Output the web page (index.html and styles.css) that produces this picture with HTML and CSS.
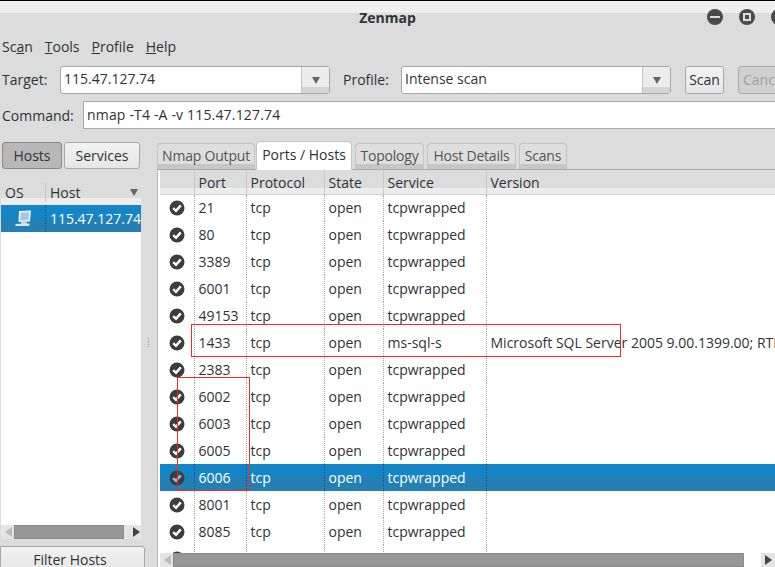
FILE: index.html
```html
<!DOCTYPE html>
<html lang="en">
<head>
    <meta charset="UTF-8">
    <title>Zenmap</title>
    <link rel="stylesheet" href="styles.css">
</head>
<body>
    <svg class="defs" width="0" height="0">
        <symbol id="ok" viewBox="0 0 16 16">
            <circle cx="8" cy="8" r="7.5" fill="#3d3d3d"/>
            <path d="M4.2 8.2 L7 10.8 L11.8 5.4" fill="none" stroke="currentColor" stroke-width="2.4"/>
        </symbol>
    </svg>
    <div class="title-bar">
        <h1>Zenmap</h1>
        <div class="win-buttons">
            <span class="win-btn"><i class="min"></i></span>
            <span class="win-btn"><i class="max"></i></span>
            <span class="win-btn"></span>
        </div>
    </div>
    <div class="menu-bar">
        <span>Sc<u>a</u>n</span>
        <span><u>T</u>ools</span>
        <span><u>P</u>rofile</span>
        <span><u>H</u>elp</span>
    </div>
    <div class="target-row">
        <label class="target-label">Target:</label>
        <div class="combo">
            <span class="combo-text">115.47.127.74</span>
            <span class="combo-arrow"><i class="tri-down"></i></span>
        </div>
        <label class="profile-label">Profile:</label>
        <div class="combo">
            <span class="combo-text">Intense scan</span>
            <span class="combo-arrow"><i class="tri-down"></i></span>
        </div>
        <button class="btn scan-btn">Scan</button>
        <button class="btn cancel-btn">Cancel</button>
    </div>
    <div class="command-row">
        <label>Command:</label>
        <div class="command-input">nmap -T4 -A -v 115.47.127.74</div>
    </div>
    <div class="panes">
        <aside class="side">
            <div class="side-toggle">
                <button class="btn toggle on">Hosts</button>
                <button class="btn toggle">Services</button>
            </div>
            <div class="host-head">
                <span class="host-os">OS</span>
                <span class="host-name">Host</span>
                <i class="tri-down"></i>
            </div>
            <div class="host-list">
                <div class="host-row">
                    <span class="host-icon">
                        <svg width="17" height="17" viewBox="0 0 17 17">
                            <path d="M4 1 L16 0.5 L15 11.5 L3.5 12 Z" fill="#f2f6f9"/>
                            <path d="M5.5 2.5 L14.4 2.2 L13.6 10 L5.2 10.4 Z" fill="#a8c8de"/>
                            <path d="M6 12 L12 12 L12 14 L6 14 Z" fill="#bcd4e4"/>
                            <path d="M0.5 14 L14.5 13.6 L14.5 16 L0.5 16 Z" fill="#dbe8f1"/>
                        </svg>
                    </span>
                    <span class="host-ip">115.47.127.74</span>
                </div>
            </div>
            <div class="scrollbar side-scroll">
                <i class="tri-left"></i>
                <span class="thumb"></span>
                <i class="tri-right"></i>
            </div>
            <button class="btn filter-btn">Filter Hosts</button>
        </aside>
        <div class="grip"><i></i></div>
        <section class="notebook">
            <div class="tabs">
                <span class="tab tab-nmap">Nmap Output</span>
                <span class="tab active">Ports / Hosts</span>
                <span class="tab tab-topo">Topology</span>
                <span class="tab tab-details">Host Details</span>
                <span class="tab tab-scans">Scans</span>
            </div>
            <div class="page">
                <div class="ports-wrap">
                    <table class="ports">
                        <colgroup>
                            <col class="c-icon"><col class="c-port"><col class="c-proto">
                            <col class="c-state"><col class="c-service"><col class="c-version">
                        </colgroup>
                        <thead>
                            <tr><th></th><th>Port</th><th>Protocol</th><th>State</th><th>Service</th><th>Version</th></tr>
                        </thead>
                        <tbody>
                            <tr><td class="ic"><svg><use href="#ok"/></svg></td><td>21</td><td>tcp</td><td>open</td><td>tcpwrapped</td><td></td></tr>
                            <tr><td class="ic"><svg><use href="#ok"/></svg></td><td>80</td><td>tcp</td><td>open</td><td>tcpwrapped</td><td></td></tr>
                            <tr><td class="ic"><svg><use href="#ok"/></svg></td><td>3389</td><td>tcp</td><td>open</td><td>tcpwrapped</td><td></td></tr>
                            <tr><td class="ic"><svg><use href="#ok"/></svg></td><td>6001</td><td>tcp</td><td>open</td><td>tcpwrapped</td><td></td></tr>
                            <tr><td class="ic"><svg><use href="#ok"/></svg></td><td>49153</td><td>tcp</td><td>open</td><td>tcpwrapped</td><td></td></tr>
                            <tr><td class="ic"><svg><use href="#ok"/></svg></td><td>1433</td><td>tcp</td><td>open</td><td>ms-sql-s</td><td>Microsoft SQL Server 2005 9.00.1399.00; RTM</td></tr>
                            <tr><td class="ic"><svg><use href="#ok"/></svg></td><td>2383</td><td>tcp</td><td>open</td><td>tcpwrapped</td><td></td></tr>
                            <tr><td class="ic"><svg><use href="#ok"/></svg></td><td>6002</td><td>tcp</td><td>open</td><td>tcpwrapped</td><td></td></tr>
                            <tr><td class="ic"><svg><use href="#ok"/></svg></td><td>6003</td><td>tcp</td><td>open</td><td>tcpwrapped</td><td></td></tr>
                            <tr><td class="ic"><svg><use href="#ok"/></svg></td><td>6005</td><td>tcp</td><td>open</td><td>tcpwrapped</td><td></td></tr>
                            <tr class="selected"><td class="ic"><svg><use href="#ok"/></svg></td><td>6006</td><td>tcp</td><td>open</td><td>tcpwrapped</td><td></td></tr>
                            <tr><td class="ic"><svg><use href="#ok"/></svg></td><td>8001</td><td>tcp</td><td>open</td><td>tcpwrapped</td><td></td></tr>
                            <tr><td class="ic"><svg><use href="#ok"/></svg></td><td>8085</td><td>tcp</td><td>open</td><td>tcpwrapped</td><td></td></tr>
                            <tr><td class="ic"><svg><use href="#ok"/></svg></td><td></td><td></td><td></td><td></td><td></td></tr>
                        </tbody>
                    </table>
                </div>
                <div class="scrollbar main-scroll">
                    <i class="tri-left"></i>
                    <span class="thumb"></span>
                    <span class="scroll-rest"></span>
                    <span class="scroll-end"><i class="tri-right"></i></span>
                </div>
            </div>
        </section>
    </div>
    <!-- red marks drawn over the screenshot -->
    <div class="mark mark-sql"></div>
    <div class="mark mark-ports"></div>
</body>
</html>
```

FILE: styles.css
```css
* {
    margin: 0;
    padding: 0;
    box-sizing: border-box;
    font-family: "Open Sans", "Noto Sans", sans-serif;
}

html, body {
    width: 775px;
    height: 567px;
    overflow: hidden;
}

body {
    position: relative;
    background-color: #dcdcdc;
    color: #2e3436;
    font-size: 14px;
}

.defs {
    position: absolute;
}

.title-bar {
    height: 32px;
    border-top: 1px solid #000;
    background: linear-gradient(#efefef 0, #efefef 12px, #dcdcdc 12px);
    display: flex;
    justify-content: center;
    align-items: center;
    position: relative;
}

.title-bar h1 {
    font-size: 14px;
    font-weight: 700;
    color: #2e3436;
    margin-top: 1px;
}

.win-buttons {
    position: absolute;
    left: 707px;
    top: 8px;
    display: flex;
    gap: 16px;
}

.win-btn {
    width: 16px;
    height: 16px;
    border-radius: 50%;
    background-color: #4a4a4a;
    display: flex;
    align-items: center;
    justify-content: center;
}

.win-btn .min {
    width: 10px;
    height: 2px;
    background-color: #dcdcdc;
}

.win-btn .max {
    width: 8px;
    height: 8px;
    border: 2px solid #dcdcdc;
}

.menu-bar {
    height: 34px;
    padding-left: 2px;
    padding-bottom: 6px;
    display: flex;
    align-items: center;
    gap: 12px;
}

.target-row {
    height: 28px;
    display: flex;
    align-items: center;
}

.target-label {
    width: 60px;
    padding-left: 2px;
    padding-bottom: 2px;
    flex-shrink: 0;
}

.profile-label {
    width: 58px;
    margin-left: 13px;
    padding-bottom: 2px;
    flex-shrink: 0;
}

.combo {
    width: 270px;
    height: 28px;
    flex-shrink: 0;
    background-color: #fff;
    border: 1px solid #a8a8a8;
    border-radius: 3px;
    display: flex;
}

.combo-text {
    flex: 1;
    padding-left: 3px;
    line-height: 24px;
}

.combo-arrow {
    width: 28px;
    border-left: 1px solid #c4c4c4;
    background: linear-gradient(#ececec 0, #ececec 20px, #d4d4d4 20px);
    display: flex;
    align-items: center;
    justify-content: center;
}

.tri-down {
    width: 0;
    height: 0;
    border-left: 4px solid transparent;
    border-right: 4px solid transparent;
    border-top: 7px solid #666;
}

.tri-left, .tri-right {
    width: 0;
    height: 0;
    border-top: 5px solid transparent;
    border-bottom: 5px solid transparent;
}

.tri-left {
    border-right: 7px solid #bbb;
}

.tri-right {
    border-left: 7px solid #444;
}

.btn {
    background: linear-gradient(#f2f2f2, #e6e6e6);
    border: 1px solid #a8a8a8;
    border-radius: 3px;
    color: #2e3436;
    font-size: 14px;
}

.scan-btn {
    width: 39px;
    height: 28px;
    margin-left: 14px;
    padding-bottom: 2px;
    flex-shrink: 0;
}

.cancel-btn {
    width: 60px;
    height: 28px;
    margin-left: 14px;
    padding: 0 0 2px 4px;
    flex-shrink: 0;
    background: #d0d0d0;
    color: #a0a0a0;
    overflow: hidden;
    white-space: nowrap;
    text-align: left;
}

.command-row {
    height: 28px;
    margin-top: 7px;
    display: flex;
    align-items: center;
}

.command-row label {
    width: 83px;
    padding-left: 2px;
    flex-shrink: 0;
}

.command-input {
    flex: 1;
    height: 28px;
    background-color: #fff;
    border: 1px solid #a8a8a8;
    border-right: none;
    padding-left: 3px;
    line-height: 26px;
    letter-spacing: .17px;
}

.panes {
    height: 425px;
    margin-top: 13px;
    display: flex;
}

.side {
    width: 141px;
    display: flex;
    flex-direction: column;
}

.side > * {
    flex-shrink: 0;
}

.side-toggle {
    height: 27px;
    padding-left: 2px;
    display: flex;
    gap: 2px;
}

.toggle {
    width: 60px;
    height: 27px;
}

.toggle + .toggle {
    width: 76px;
}

.toggle.on {
    background-color: #b8b8b8;
    background-image: none;
    border-color: #8a8a8a;
}

.host-head {
    height: 24px;
    margin-top: 12px;
    margin-left: 1px;
    padding-bottom: 2px;
    display: flex;
    align-items: center;
    background: linear-gradient(#dcdcdc 0, #dcdcdc 17px, #ececec 17px);
}

.host-os {
    width: 45px;
    padding-left: 4px;
    border-right: 1px solid #c8c8c8;
}

.host-name {
    flex: 1;
    padding-left: 4px;
}

.host-head .tri-down {
    margin-right: 3px;
}

.host-list {
    height: 320px;
    margin-left: 1px;
    background-color: #fff;
}

.host-row {
    height: 27px;
    display: flex;
    align-items: center;
    color: #fff;
    background: linear-gradient(#1486c8 0, #1486c8 50%, #2480b4 50%);
    overflow: hidden;
}

.host-icon {
    width: 45px;
    height: 27px;
    padding-left: 14px;
    display: flex;
    align-items: center;
    border-right: 1px dotted #0d4f78;
}

.host-ip {
    padding-left: 4px;
    white-space: nowrap;
}

.scrollbar {
    display: flex;
    align-items: center;
    background-color: #e4e4e4;
}

.side-scroll {
    height: 14px;
    margin-left: 1px;
    padding-left: 4px;
}

.thumb {
    height: 14px;
    background-color: #979797;
    border: 1px solid #8a8a8a;
}

.side-scroll .thumb {
    width: 110px;
    margin: 0 9px 0 2px;
}

.filter-btn {
    width: 145px;
    height: 26px;
    margin-top: 7px;
    padding-right: 5px;
    border-radius: 0 3px 0 0;
}

.grip {
    width: 16px;
    padding: 196px 0 0 7px;
}

.grip i {
    display: block;
    width: 1px;
    height: 9px;
    border-left: 1px dotted #999;
}

.notebook {
    flex: 1;
    display: flex;
    flex-direction: column;
    min-width: 0;
}

.tabs {
    height: 28px;
    display: flex;
    align-items: flex-end;
    gap: 1px;
    border-bottom: 1px solid #a8a8a8;
}

.tab {
    height: 26px;
    line-height: 24px;
    text-align: center;
    border: 1px solid #c4c4c4;
    border-bottom: none;
    border-radius: 4px 4px 0 0;
    background: linear-gradient(#dedede 0, #dedede 20px, #c6c6c6 20px);
    color: #555;
    letter-spacing: -.2px;
    white-space: nowrap;
    flex-shrink: 0;
}

.tab-nmap {
    width: 98px;
}

.tab.active {
    width: 96px;
    height: 29px;
    margin-bottom: -1px;
    background: #fff;
    color: #2e3436;
    line-height: 25px;
    letter-spacing: 0;
    position: relative;
}

.tab-topo {
    width: 69px;
    margin-left: 2px;
}

.tab-details {
    width: 89px;
    margin-left: 2px;
}

.tab-scans {
    width: 48px;
    margin-left: 2px;
}

.page {
    flex: 1;
    min-height: 0;
    border-left: 1px solid #b8b8b8;
    padding-left: 2px;
    display: flex;
    flex-direction: column;
    background-color: #fff;
}

.ports-wrap {
    flex: 1;
    min-height: 0;
    overflow: hidden;
}

.ports {
    border-collapse: collapse;
    table-layout: fixed;
    width: 615px;
}

.c-icon { width: 34px; }
.c-port { width: 52px; }
.c-proto { width: 78px; }
.c-state { width: 59px; }
.c-service { width: 103px; }
.c-version { width: 289px; }

.ports th {
    height: 24px;
    font-weight: 400;
    text-align: left;
    padding: 2px 0 0 4px;
    background: linear-gradient(#dcdcdc 0, #dcdcdc 18px, #ececec 18px);
    border-left: 1px solid #c8c8c8;
    border-bottom: 1px solid #d0d0d0;
}

.ports th:first-child {
    border-left: none;
}

.ports td {
    height: 27px;
    padding-left: 4px;
    border-left: 1px dotted #a8a8a8;
    white-space: nowrap;
    color: #2e3436;
}

.ports td.ic {
    border-left: none;
    padding-left: 9px;
    color: #fff;
}

.ports td.ic svg {
    width: 16px;
    height: 16px;
    display: block;
}

.ports tr.selected td {
    background: linear-gradient(#1486c8 0, #1486c8 50%, #2480b4 50%);
    color: #fff;
    border-left-color: #0d4f78;
}

.ports tr.selected td.ic {
    color: #8fc4e6;
}

.main-scroll {
    height: 14px;
    flex-shrink: 0;
    padding-left: 4px;
}

.main-scroll .thumb {
    width: 571px;
    margin-left: 2px;
}

.scroll-rest {
    width: 17px;
    height: 14px;
    background-color: #fff;
}

.scroll-end {
    width: 14px;
    display: flex;
    justify-content: center;
}

.mark {
    position: absolute;
    border: 1px solid #ee2a2a;
}

.mark-sql {
    left: 191px;
    top: 324px;
    width: 430px;
    height: 33px;
}

.mark-ports {
    left: 177px;
    top: 377px;
    width: 73px;
    height: 114px;
}
```
